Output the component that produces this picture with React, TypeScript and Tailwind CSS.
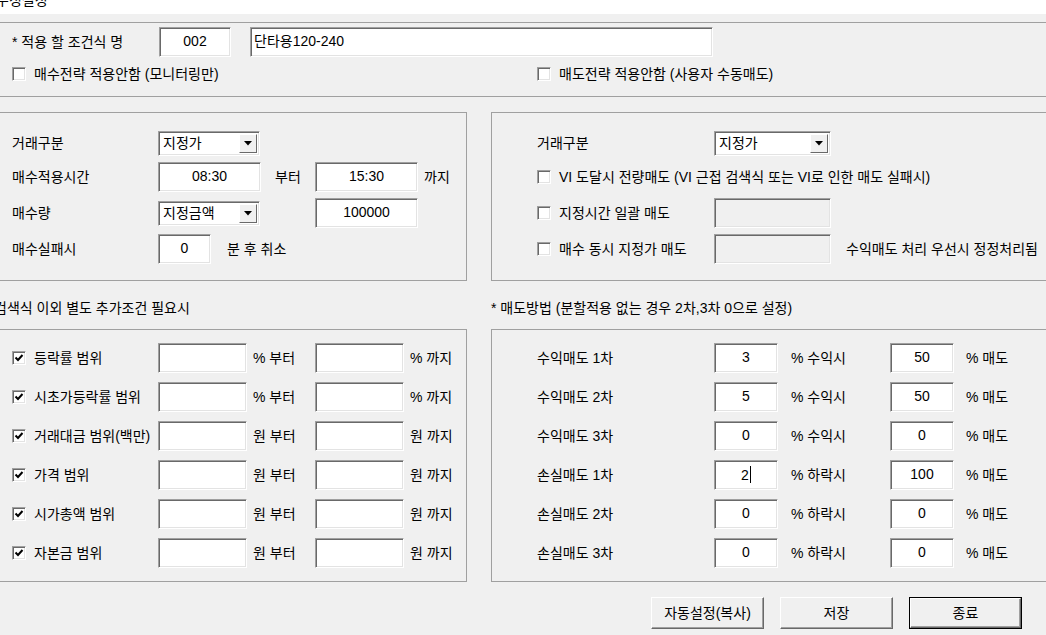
import React from "react";

const sunken =
  "border border-t-[#a0a0a0] border-l-[#a0a0a0] border-r-white border-b-white shadow-[inset_1px_1px_0_#696969,inset_-1px_-1px_0_#e3e3e3]";

function Edit({
  w,
  value,
  left,
  disabled,
  caret,
}: {
  w: string;
  value?: string;
  left?: boolean;
  disabled?: boolean;
  caret?: boolean;
}) {
  return (
    <div
      className={`${w} h-[30px] ${sunken} ${disabled ? "bg-[#f0f0f0]" : "bg-white"} flex items-start pt-[5px] shrink-0 ${
        left ? "justify-start pl-[3px]" : "justify-center"
      }`}
    >
      <span className="leading-[16px] text-[14px] flex items-center">
        {value}
        {caret && <span className="inline-block w-px h-[17px] bg-black ml-px" />}
      </span>
    </div>
  );
}

function Combo({ w, value }: { w: string; value: string }) {
  return (
    <div className={`${w} h-[25px] ${sunken} bg-white flex items-stretch shrink-0 p-[2px]`}>
      <span className="flex-1 pl-[2px] leading-[18px]">{value}</span>
      <div className="w-[18px] bg-[#f0f0f0] border border-t-white border-l-white border-r-[#696969] border-b-[#696969] flex items-center justify-center">
        <svg width="8" height="5" viewBox="0 0 8 5">
          <polygon points="0,0 8,0 4,4.5" fill="#000" />
        </svg>
      </div>
    </div>
  );
}

function Check({ checked }: { checked?: boolean }) {
  return (
    <div className={`w-[14px] h-[14px] bg-white ${sunken} flex items-center justify-center shrink-0`}>
      {checked && (
        <svg width="10" height="10" viewBox="0 0 10 10">
          <polyline points="1.5,4.5 4,7 8.5,2" fill="none" stroke="#000" strokeWidth="2" />
        </svg>
      )}
    </div>
  );
}

function Button({ label, primary }: { label: string; primary?: boolean }) {
  const inner = (
    <div className="w-full h-full bg-[#f0f0f0] border border-t-white border-l-white border-r-[#696969] border-b-[#696969] shadow-[inset_-1px_-1px_0_#a0a0a0] flex items-center justify-center text-[14px]">
      {label}
    </div>
  );
  return primary ? (
    <div className="w-[113px] h-[32px] border border-black">{inner}</div>
  ) : (
    <div className="w-[113px] h-[32px]">{inner}</div>
  );
}

export default function App() {
  const filters = [
    { label: "등락률 범위", unit: "%" },
    { label: "시초가등락률 범위", unit: "%" },
    { label: "거래대금 범위(백만)", unit: "원" },
    { label: "가격 범위", unit: "원" },
    { label: "시가총액 범위", unit: "원" },
    { label: "자본금 범위", unit: "원" },
  ];

  const sells = [
    { label: "수익매도 1차", a: "3", mid: "% 수익시", b: "50" },
    { label: "수익매도 2차", a: "5", mid: "% 수익시", b: "50" },
    { label: "수익매도 3차", a: "0", mid: "% 수익시", b: "0" },
    { label: "손실매도 1차", a: "2", mid: "% 하락시", b: "100", caret: true },
    { label: "손실매도 2차", a: "0", mid: "% 하락시", b: "0" },
    { label: "손실매도 3차", a: "0", mid: "% 하락시", b: "0" },
  ];

  return (
    <div className="w-[1046px] h-[635px] overflow-hidden bg-[#f0f0f0] text-black text-[14px] font-['Liberation_Sans','Noto_Sans_CJK_KR',sans-serif]">
      {/* 상단 흰 영역 (잘린 제목) */}
      <div className="h-[14px] bg-white overflow-hidden">
        <div className="-mt-[9px] -ml-[4px] text-[14px] leading-[18px]">수정설정</div>
      </div>

      {/* 조건식 명 */}
      <div className="mt-[8px] h-[75px] border-t border-b border-[#a0a0a0]">
        <div className="flex items-center mt-[4px] h-[30px]">
          <span className="w-[159px] pl-[12px] shrink-0">* 적용 할 조건식 명</span>
          <Edit w="w-[72px]" value="002" />
          <div className="w-[19px]" />
          <Edit w="w-[463px]" value="단타용120-240" left />
        </div>
        <div className="flex items-center mt-[4px] h-[26px]">
          <div className="w-[537px] pl-[12px] flex items-center gap-[8px] shrink-0">
            <Check />
            <span>매수전략 적용안함 (모니터링만)</span>
          </div>
          <div className="flex items-center gap-[8px]">
            <Check />
            <span>매도전략 적용안함 (사용자 수동매도)</span>
          </div>
        </div>
      </div>

      {/* 매수 / 매도 설정 */}
      <div className="flex mt-[15px] gap-[24px]">
        <div className="w-[467px] h-[169px] border-t border-r border-b border-[#a0a0a0] pt-[15px] flex flex-col gap-[6px]">
          <div className="flex items-center h-[30px] -mb-[6px]">
            <span className="w-[158px] pl-[12px] shrink-0">거래구분</span>
            <Combo w="w-[102px]" value="지정가" />
          </div>
          <div className="flex items-center h-[30px] mt-[4px]">
            <span className="w-[158px] pl-[12px] shrink-0">매수적용시간</span>
            <Edit w="w-[103px]" value="08:30" />
            <span className="w-[54px] pl-[14px] shrink-0">부터</span>
            <Edit w="w-[103px]" value="15:30" />
            <span className="pl-[6px]">까지</span>
          </div>
          <div className="flex items-center h-[30px]">
            <span className="w-[158px] pl-[12px] shrink-0">매수량</span>
            <Combo w="w-[102px]" value="지정금액" />
            <div className="w-[55px] shrink-0" />
            <Edit w="w-[103px]" value="100000" />
          </div>
          <div className="flex items-center h-[30px]">
            <span className="w-[158px] pl-[12px] shrink-0">매수실패시</span>
            <Edit w="w-[53px]" value="0" />
            <span className="pl-[16px]">분 후 취소</span>
          </div>
        </div>

        <div className="flex-1 h-[169px] border-t border-l border-b border-[#a0a0a0] pt-[15px] pl-[45px] flex flex-col gap-[6px]">
          <div className="flex items-center h-[30px] -mb-[6px]">
            <span className="w-[177px] shrink-0">거래구분</span>
            <Combo w="w-[117px]" value="지정가" />
          </div>
          <div className="flex items-center h-[30px] mt-[4px] gap-[8px]">
            <Check />
            <span className="whitespace-nowrap">VI 도달시 전량매도 (VI 근접 검색식 또는 VI로 인한 매도 실패시)</span>
          </div>
          <div className="flex items-center h-[30px]">
            <div className="w-[177px] flex items-center gap-[8px] shrink-0">
              <Check />
              <span>지정시간 일괄 매도</span>
            </div>
            <Edit w="w-[117px]" disabled />
          </div>
          <div className="flex items-center h-[30px]">
            <div className="w-[177px] flex items-center gap-[8px] shrink-0">
              <Check />
              <span>매수 동시 지정가 매도</span>
            </div>
            <Edit w="w-[117px]" disabled />
            <span className="pl-[15px] whitespace-nowrap">수익매도 처리 우선시 정정처리됨</span>
          </div>
        </div>
      </div>

      {/* 추가조건 / 매도방법 */}
      <div className="flex gap-[24px]">
        <div className="w-[467px] shrink-0">
          <div className="h-[48px] pt-[19px] leading-[16px] -ml-[6px] whitespace-nowrap">
            검색식 이외 별도 추가조건 필요시
          </div>
          <div className="h-[253px] border-t border-r border-b border-[#a0a0a0] pt-[13px] flex flex-col gap-[9px]">
            {filters.map((f, i) => (
              <div key={i} className="flex items-center h-[30px]">
                <div className="w-[158px] pl-[12px] flex items-center gap-[8px] shrink-0">
                  <Check checked />
                  <span className="whitespace-nowrap">{f.label}</span>
                </div>
                <Edit w="w-[89px]" />
                <span className="w-[68px] pl-[6px] shrink-0">{f.unit} 부터</span>
                <Edit w="w-[89px]" />
                <span className="pl-[6px]">{f.unit} 까지</span>
              </div>
            ))}
          </div>
        </div>

        <div className="flex-1">
          <div className="h-[48px] pt-[19px] leading-[16px] whitespace-nowrap">
            * 매도방법 (분할적용 없는 경우 2차,3차 0으로 설정)
          </div>
          <div className="h-[253px] border-t border-l border-b border-[#a0a0a0] pt-[13px] pl-[45px] flex flex-col gap-[9px]">
            {sells.map((s, i) => (
              <div key={i} className="flex items-center h-[30px]">
                <span className="w-[177px] shrink-0">{s.label}</span>
                <Edit w="w-[64px]" value={s.a} caret={s.caret} />
                <span className="w-[112px] pl-[13px] shrink-0">{s.mid}</span>
                <Edit w="w-[64px]" value={s.b} />
                <span className="pl-[12px]">% 매도</span>
              </div>
            ))}
          </div>
        </div>
      </div>

      {/* 하단 버튼 */}
      <div className="flex justify-end gap-[16px] pr-[24px] pt-[15px]">
        <Button label="자동설정(복사)" />
        <Button label="저장" />
        <Button label="종료" primary />
      </div>
    </div>
  );
}
